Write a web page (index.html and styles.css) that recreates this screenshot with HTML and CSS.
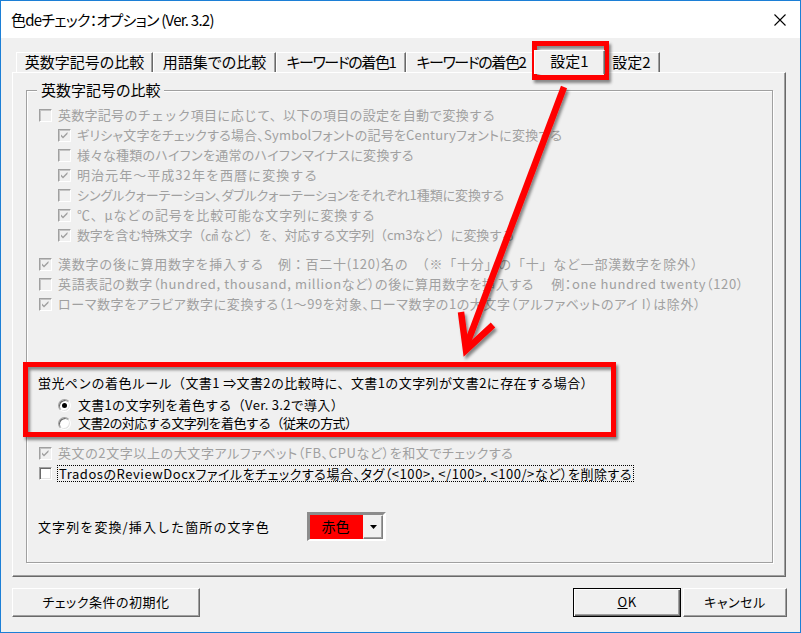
FILE: index.html
```html
<!DOCTYPE html>
<html lang="ja">
<head>
<meta charset="utf-8">
<title>色deチェック：オプション</title>
<link rel="stylesheet" href="styles.css">
</head>
<body>
<div class="window">
  <div class="titlebar">
    <span class="title">色deチェック：オプション (Ver. 3.2)</span>
    <svg class="close" viewBox="0 0 12 12" width="12" height="12"><path d="M0.5 0.5 11.5 11.5 M11.5 0.5 0.5 11.5" stroke="#000" stroke-width="1.1" fill="none"/></svg>
  </div>
  <div class="client">
    <div class="tabs">
      <div class="tab t1">英数字記号の比較</div>
      <div class="tab t2">用語集での比較</div>
      <div class="tab t3">キーワードの着色1</div>
      <div class="tab t4">キーワードの着色2</div>
      <div class="tab t5 sel">設定1</div>
      <div class="tab t6">設定2</div>
    </div>
    <div class="panel">
      <div class="group">
        <div class="caption">英数字記号の比較</div>
        <div class="rows">
          <div class="row dis auto-conv"><span class="cb"></span><span>英数字記号のチェック項目に応じて、以下の項目の設定を自動で変換する</span></div>
          <div class="row dis ind greek"><span class="cb"><svg viewBox="0 0 11 11" width="11" height="11"><path d="M2 4.5 4 6.5 8.5 2 8.5 4 4 8.5 2 6.5z"/></svg></span><span>ギリシャ文字をチェックする場合、Symbolフォントの記号をCenturyフォントに変換する</span></div>
          <div class="row dis ind hyphen"><span class="cb"></span><span>様々な種類のハイフンを通常のハイフンマイナスに変換する</span></div>
          <div class="row dis ind era"><span class="cb"><svg viewBox="0 0 11 11" width="11" height="11"><path d="M2 4.5 4 6.5 8.5 2 8.5 4 4 8.5 2 6.5z"/></svg></span><span>明治元年～平成32年を西暦に変換する</span></div>
          <div class="row dis ind quote"><span class="cb"></span><span>シングルクォーテーション、ダブルクォーテーションをそれぞれ1種類に変換する</span></div>
          <div class="row dis ind symbol"><span class="cb"><svg viewBox="0 0 11 11" width="11" height="11"><path d="M2 4.5 4 6.5 8.5 2 8.5 4 4 8.5 2 6.5z"/></svg></span><span>℃、μなどの記号を比較可能な文字列に変換する</span></div>
          <div class="row dis ind special"><span class="cb"><svg viewBox="0 0 11 11" width="11" height="11"><path d="M2 4.5 4 6.5 8.5 2 8.5 4 4 8.5 2 6.5z"/></svg></span><span>数字を含む特殊文字（㎠ など）を、対応する文字列（cm3など）に変換する</span></div>
        </div>
        <div class="rows second">
          <div class="row dis kanji"><span class="cb"><svg viewBox="0 0 11 11" width="11" height="11"><path d="M2 4.5 4 6.5 8.5 2 8.5 4 4 8.5 2 6.5z"/></svg></span><span>漢数字の後に算用数字を挿入する　例：百二十(120)名の　（※「十分」の「十」など一部漢数字を除外）</span></div>
          <div class="row dis english"><span class="cb"></span><span>英語表記の数字（hundred, thousand, millionなど）の後に算用数字を挿入する　 例：one hundred twenty（120）</span></div>
          <div class="row dis roman"><span class="cb"><svg viewBox="0 0 11 11" width="11" height="11"><path d="M2 4.5 4 6.5 8.5 2 8.5 4 4 8.5 2 6.5z"/></svg></span><span>ローマ数字をアラビア数字に変換する（1～99を対象、ローマ数字の1の大文字（アルファベットのアイ I）は除外）</span></div>
        </div>
        <div class="radios">
          <div class="rtitle">蛍光ペンの着色ルール（文書1 ⇒文書2の比較時に、文書1の文字列が文書2に存在する場合）</div>
          <div class="radio-row r1"><span class="radio on"></span><span>文書1の文字列を着色する（Ver. 3.2で導入）</span></div>
          <div class="radio-row r2"><span class="radio"></span><span>文書2の対応する文字列を着色する（従来の方式）</span></div>
        </div>
        <div class="rows third">
          <div class="row dis caps"><span class="cb"><svg viewBox="0 0 11 11" width="11" height="11"><path d="M2 4.5 4 6.5 8.5 2 8.5 4 4 8.5 2 6.5z"/></svg></span><span>英文の2文字以上の大文字アルファベット（FB、CPUなど）を和文でチェックする</span></div>
          <div class="row trados"><span class="cb en"></span><span class="focus">TradosのReviewDocxファイルをチェックする場合、タグ（&lt;100&gt;, &lt;/100&gt;, &lt;100/&gt;など）を削除する</span></div>
        </div>
        <div class="colorrow">
          <span class="color-label">文字列を変換/挿入した箇所の文字色</span>
          <div class="combo">
            <span class="combo-val">赤色</span>
            <span class="combo-btn"><svg viewBox="0 0 7 4" width="7" height="4"><path d="M0 0h7L3.5 4z"/></svg></span>
          </div>
        </div>
      </div>
    </div>
    <div class="buttons">
      <div class="btn init">チェック条件の初期化</div>
      <div class="btn-pair">
        <div class="btn ok"><span class="u">O</span>K</div>
        <div class="btn cancel">キャンセル</div>
      </div>
    </div>
  </div>
  <svg class="annot" viewBox="0 0 801 633" width="801" height="633">
    <defs>
      <filter id="sh" x="-20%" y="-20%" width="140%" height="140%">
        <feDropShadow dx="2" dy="3" stdDeviation="1.6" flood-color="#000" flood-opacity="0.45"/>
      </filter>
    </defs>
    <g filter="url(#sh)" fill="none" stroke="#ff0000">
      <rect x="534.5" y="43.5" width="72" height="34" stroke-width="5"/>
      <rect x="25.5" y="364.5" width="588" height="70" stroke-width="5"/>
      <path d="M564 87 L467 344" stroke-width="6.5"/>
      <path d="M461 312 L466 350 L493 325" stroke-width="6.5" stroke-linejoin="miter"/>
    </g>
  </svg>
</div>
</body>
</html>
```
FILE: styles.css
```css
* { box-sizing: border-box; }
html, body { margin: 0; padding: 0; }
body {
  width: 801px;
  height: 633px;
  overflow: hidden;
  background: #f0f0f0;
  font-family: "Noto Sans CJK JP", "Noto Sans", sans-serif;
  color: #000;
}
.window {
  position: relative;
  width: 801px;
  height: 633px;
  border: 1px solid #1c7fd6;
  background: #f0f0f0;
}
.titlebar {
  height: 37px;
  background: #fff;
  display: flex;
  align-items: center;
  justify-content: space-between;
  padding: 0 14px 0 10px;
}
.title {
  font-size: 15px;
  line-height: 20px;
  font-feature-settings: "palt";
  letter-spacing: -0.75px;
}
.close { display: block; }
.client { padding-top: 14px; }

/* tabs */
.tabs {
  display: flex;
  align-items: flex-end;
  height: 20px;
  margin-left: 15px;
}
.tab {
  flex: none;
  height: 20px;
  border-top: 1px solid #fff;
  border-left: 1px solid #fff;
  border-right: 1px solid #696969;
  box-shadow: inset -1px 0 #a0a0a0;
  font-size: 15px;
  line-height: 18px;
  text-align: center;
  white-space: nowrap;
  font-feature-settings: "palt";
  background: #f0f0f0;
}
.t1 { width: 137px; }
.t2 { width: 123px; }
.t3, .t4 { width: 130px; letter-spacing: -1.4px; }
.t5 { width: 71px; }
.t6 { width: 57px; }
.tab.sel {
  height: 24px;
  margin: 0 -2px -2px;
  line-height: 20px;
  position: relative;
  z-index: 1;
}

/* panel */
.panel {
  margin-left: 11px;
  width: 774px;
  height: 505px;
  border-top: 1px solid #fff;
  border-left: 1px solid #fff;
  border-right: 1px solid #696969;
  border-bottom: 1px solid #696969;
  box-shadow: inset -1px -1px #a0a0a0;
  padding: 17px 0 0 13px;
}
.group {
  width: 747px;
  height: 473px;
  border: 1px solid #a0a0a0;
  box-shadow: inset 1px 1px #fff, 1px 1px #fff;
}
.caption {
  width: fit-content;
  margin: -11px 0 0 10px;
  padding: 0 4px;
  background: #f0f0f0;
  font-size: 15px;
  line-height: 20px;
  font-feature-settings: "palt";
}
.rows { margin-top: 5px; }
.rows.second { margin-top: 9px; }
.rows.third { margin-top: 11px; }
.row {
  display: flex;
  align-items: center;
  height: 20px;
  padding-left: 12px;
  font-size: 13px;
  line-height: 18px;
  white-space: nowrap;
  letter-spacing: 0.4px;
}
.row.ind { padding-left: 31px; }

/* per-row text fitting (the original uses a proportional bitmap font) */
.auto-conv { letter-spacing: 0.28px; }
.greek { font-feature-settings: "palt"; letter-spacing: 0.2px; }
.hyphen { font-feature-settings: "palt"; letter-spacing: 0.3px; }
.era { letter-spacing: 1.05px; }
.quote { font-feature-settings: "palt"; letter-spacing: -0.08px; }
.symbol { letter-spacing: 0.8px; }
.special { letter-spacing: -0.2px; }
.kanji { letter-spacing: 0.75px; }
.english { font-feature-settings: "palt"; letter-spacing: 0.63px; }
.roman { font-feature-settings: "palt"; letter-spacing: 0.6px; }
.caps { font-feature-settings: "palt"; letter-spacing: 0.6px; }
.trados { font-feature-settings: "palt"; letter-spacing: 0.55px; }

.dis { color: #a0a0a0; }
.cb {
  flex: none;
  width: 13px;
  height: 13px;
  margin-right: 6px;
  border: 1px solid;
  border-color: #a0a0a0 #fff #fff #a0a0a0;
  box-shadow: inset 1px 1px #c4c4c4;
  background: #f0f0f0;
  color: #a0a0a0;
  display: flex;
}
.cb svg { display: block; fill: currentColor; }
.cb.en {
  background: #fff;
  box-shadow: inset 1px 1px #696969, inset -1px -1px #e3e3e3;
  margin-right: 5px;
}
.focus {
  border: 1px dotted #000;
  padding: 0 1px;
  line-height: 15px;
}

/* radio group */
.radios { margin-top: 59px; }
.rtitle {
  height: 20px;
  padding-left: 11px;
  font-size: 13px;
  line-height: 20px;
  white-space: nowrap;
  letter-spacing: 0.4px;
}
.radio-row {
  display: flex;
  align-items: center;
  height: 18px;
  padding-left: 31px;
  font-size: 13px;
  line-height: 18px;
  white-space: nowrap;
}
.r1 { letter-spacing: 0.3px; }
.r2 { letter-spacing: -0.6px; }
.rtitle + .radio-row { margin-top: 3px; }
.radio {
  flex: none;
  width: 13px;
  height: 13px;
  margin-right: 7px;
  border-radius: 50%;
  border: 1px solid;
  border-color: #a0a0a0 #fff #fff #a0a0a0;
  box-shadow: inset 1px 1px #696969, inset -1px -1px #e3e3e3;
  background: #fff;
  display: flex;
  align-items: center;
  justify-content: center;
}
.radio.on::after {
  content: "";
  width: 5px;
  height: 5px;
  border-radius: 50%;
  background: #000;
}

/* colour row */
.colorrow {
  display: flex;
  align-items: center;
  height: 29px;
  margin-top: 29px;
  padding-left: 11px;
}
.color-label {
  width: 269px;
  font-size: 13px;
  white-space: nowrap;
  letter-spacing: 1.1px;
}
.combo {
  display: flex;
  width: 79px;
  height: 29px;
  border-style: solid;
  border-width: 3px 3px 2px 3px;
  border-color: #8c8c8c #fff #fff #8c8c8c;
}
.combo-val {
  flex: 1;
  background: #ff0000;
  font-size: 14px;
  line-height: 23px;
  text-align: center;
  padding-right: 2px;
}
.combo-btn {
  width: 20px;
  border: 1px solid;
  border-color: #f0f0f0 #808080 #808080 #f0f0f0;
  box-shadow: inset -1px -1px #a0a0a0;
  background: #f0f0f0;
  display: flex;
  align-items: center;
  justify-content: center;
}
.combo-btn svg { display: block; fill: #000; }

/* buttons */
.buttons {
  display: flex;
  justify-content: space-between;
  width: 775px;
  margin: 11px 0 0 11px;
}
.btn-pair { display: flex; gap: 2px; }
.btn {
  height: 29px;
  border: 1px solid;
  border-color: #fff #696969 #696969 #fff;
  box-shadow: inset -1px -1px #a0a0a0;
  font-size: 13px;
  line-height: 26px;
  text-align: center;
  white-space: nowrap;
  font-feature-settings: "palt";
  letter-spacing: 0.5px;
}
.init { width: 188px; }
.ok {
  width: 108px;
  border: 1px solid #000;
  box-shadow: inset 1px 1px #fff, inset -1px -1px #696969, inset -2px -2px #a0a0a0;
}
.cancel { width: 104px; }
.u { text-decoration: underline; }

/* annotations drawn over the dialog */
.annot {
  position: absolute;
  left: -1px;
  top: -1px;
  pointer-events: none;
}
```
